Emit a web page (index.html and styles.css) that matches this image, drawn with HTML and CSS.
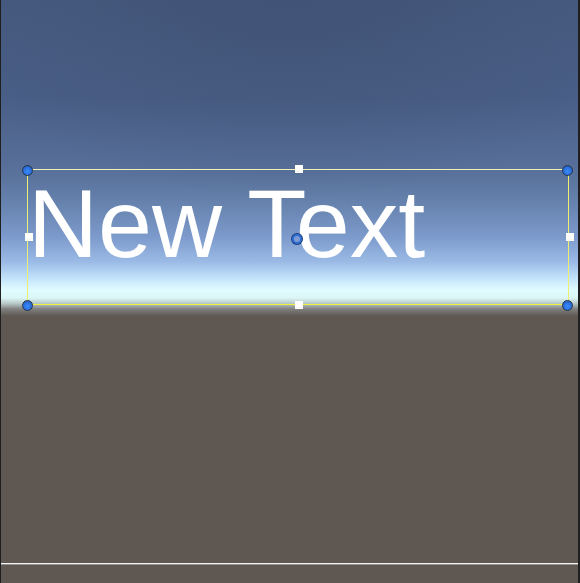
FILE: index.html
```html
<!DOCTYPE html>
<html>
<head>
<meta charset="utf-8">
<link rel="stylesheet" href="styles.css">
</head>
<body>
<div class="scene">
  <div class="sky"></div>
  <div class="ground">
    <div class="floor-line"></div>
  </div>
  <div class="rect">
    <div class="label">New Text</div>
    <span class="corner tl"></span>
    <span class="corner tr"></span>
    <span class="corner bl"></span>
    <span class="corner br"></span>
    <span class="handle top"></span>
    <span class="handle bottom"></span>
    <span class="handle left"></span>
    <span class="handle right"></span>
    <span class="pivot"></span>
  </div>
</div>
</body>
</html>
```
FILE: styles.css
```css
html, body {
  margin: 0;
  padding: 0;
  background: #1f1f1f;
}
body {
  width: 580px;
  height: 583px;
  overflow: hidden;
}
.scene {
  position: relative;
  margin-left: 1px;
  width: 577px;
  height: 583px;
  display: flex;
  flex-direction: column;
  overflow: hidden;
}
.sky {
  height: 316px;
  flex: none;
  background:
    radial-gradient(ellipse 360px 200px at 50% 0%, rgba(60, 78, 110, 0.55), rgba(60, 78, 110, 0) 100%),
    linear-gradient(to bottom,
      #465a80 0px,
      #4a5f87 100px,
      #58709a 170px,
      #6480ab 200px,
      #7c9acb 237px,
      #9bbbe6 262px,
      #c2e2fa 278px,
      #e0fcff 290px,
      #dcf6f6 298px,
      #b4c2c2 304px,
      #80807e 309px,
      #5f5853 316px);
}
.ground {
  flex: 1;
  background: #5e5752;
  display: flex;
  flex-direction: column;
  padding-top: 247px;
}
.floor-line {
  height: 1px;
  background: #f4f4f4;
  box-shadow: 0 1px 0 rgba(255, 255, 255, 0.35);
}
.rect {
  position: absolute;
  left: 26px;
  top: 169px;
  width: 540px;
  height: 134px;
  border: 1px solid #eeee70;
  border-top-color: #f2f2b8;
  border-bottom-color: #f4ee3c;
}
.label {
  font-family: "Liberation Sans", Arial, sans-serif;
  font-size: 97px;
  line-height: 97px;
  color: #ffffff;
  margin-top: 5px;
  white-space: nowrap;
}
.corner {
  position: absolute;
  width: 9px;
  height: 9px;
  border-radius: 50%;
  border: 1px solid #27354a;
  background: radial-gradient(circle at 50% 60%, #3a8cff 0%, #2a6fdc 55%, #1f4f9c 100%);
}
.tl { left: -6px; top: -5px; }
.tr { right: -5px; top: -5px; }
.bl { left: -6px; bottom: -7px; }
.br { right: -5px; bottom: -7px; }
.handle {
  position: absolute;
  width: 8px;
  height: 8px;
  background: linear-gradient(to bottom, #ffffff 0%, #ffffff 70%, #e4e4e4 70%, #ffffff 85%);
}
.handle.top { left: 267px; top: -5px; }
.handle.bottom { left: 267px; bottom: -5px; }
.handle.left { left: -3px; top: 63px; }
.handle.right { right: -6px; top: 63px; }
.pivot {
  position: absolute;
  left: 264px;
  top: 64px;
  width: 6px;
  height: 6px;
  border-radius: 50%;
  border: 2px solid #2d6fd6;
  background: #7d9bd0;
  box-shadow: 0 0 0 1px #1f3e78;
}
```
